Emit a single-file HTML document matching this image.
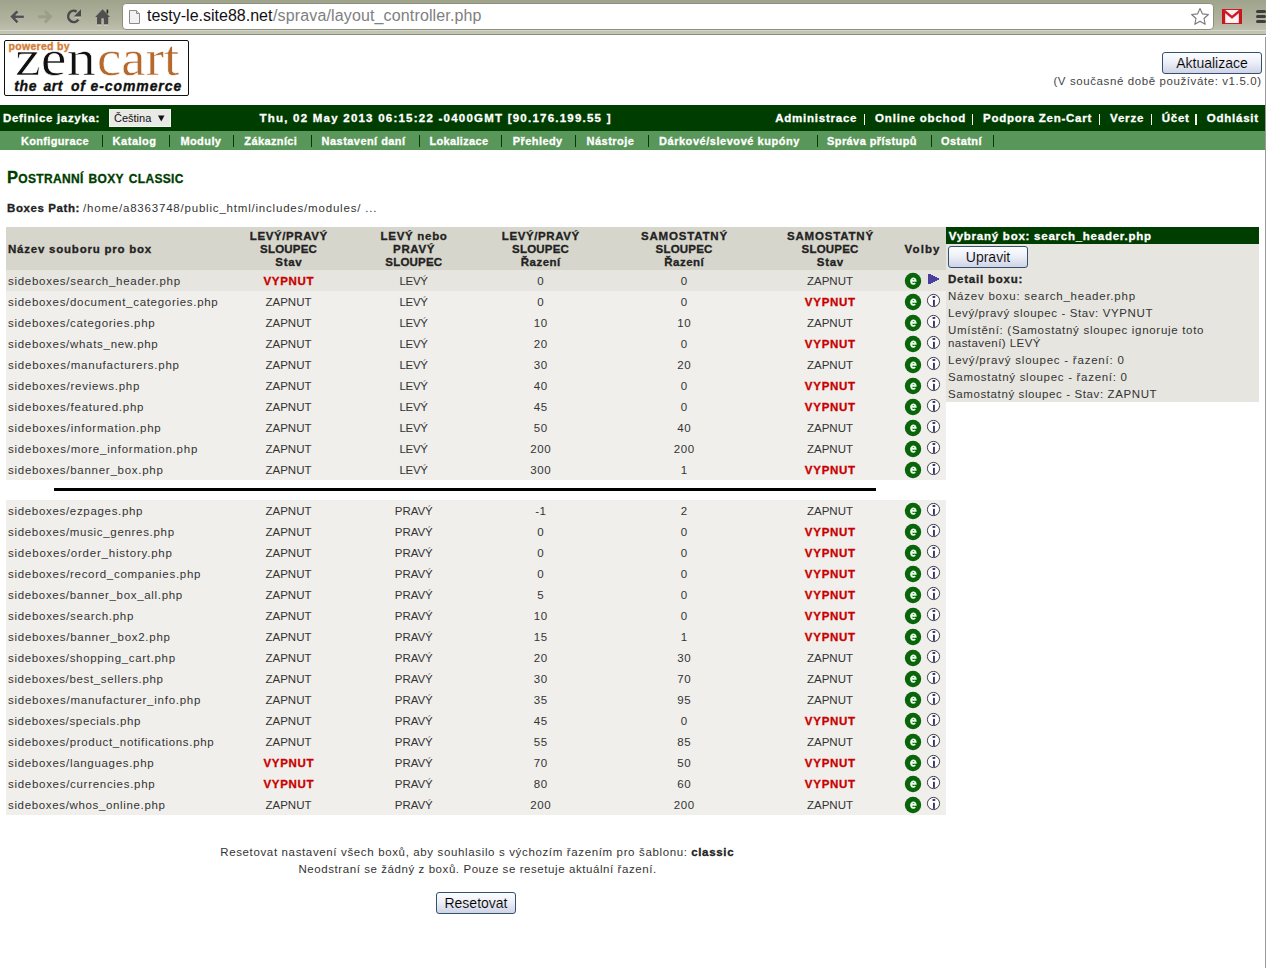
<!DOCTYPE html>
<html><head><meta charset="utf-8"><title>layout_controller</title>
<style>
html,body{margin:0;padding:0;background:#fff;width:1266px;height:968px;overflow:hidden;position:relative}
body{font-family:"Liberation Sans",sans-serif}
.t{position:absolute;white-space:pre;line-height:20px;height:20px}
.r{position:absolute}
.btn{position:absolute;box-sizing:border-box;border:1px solid #33506e;border-radius:3px;background:linear-gradient(#fdfdff 0%,#eef0f8 45%,#cfd3e6 100%);}
</style></head><body>

<div class="r" style="left:0px;top:0px;width:1266px;height:34px;background:linear-gradient(#a0a38b,#b1b39e 60%,#c4c6b6)"></div>
<div class="r" style="left:0px;top:34px;width:1266px;height:1px;background:#8a8c7c"></div>
<div class="r" style="left:0px;top:30px;width:1266px;height:1px;background:#d6d7ca"></div>
<div class="r" style="left:122px;top:3px;width:1092px;height:27px;box-sizing:border-box;border:1px solid #8d8f7e;border-radius:4px;background:#fff"></div>
<svg style="position:absolute;left:128px;top:9px" width="13" height="16" viewBox="0 0 13 16"><path d="M1.5 1.5h7l3 3v10h-10z" fill="#f2f2f2" stroke="#8a8a8a" stroke-width="1"/><path d="M8.5 1.5v3h3" fill="#ddd" stroke="#8a8a8a" stroke-width="1"/></svg>
<div class="t" style="left:147.00px;top:6px;font-size:16px;color:#111;letter-spacing:0.000px;">testy-le.site88.net</div>
<div class="t" style="left:273.00px;top:6px;font-size:16px;color:#808080;letter-spacing:0.140px;">/sprava/layout_controller.php</div>
<svg style="position:absolute;left:0;top:0" width="120" height="34" viewBox="0 0 120 34">
<g fill="#505050">
<path d="M10 16.5l6.5-6.5 2.2 2.2-3.1 3.1h8.6v3h-8.6l3.1 3.1-2.2 2.2z" stroke="#fff" stroke-opacity="0.5" stroke-width="0.6"/>
</g>
<path d="M52.5 16.5l-6.5-6.5-2.2 2.2 3.1 3.1h-8.6v3h8.6l-3.1 3.1 2.2 2.2z" fill="#9b9e8b"/>
<path d="M76.6 11.55A5.6 5.6 0 1 0 78.4 19.6" fill="none" stroke="#4a4a4a" stroke-width="2.5"/><path d="M81 9.3V16.5H73.9z" fill="#4a4a4a"/><path d="M74.5 17.2H81" stroke="#fff" stroke-opacity="0.45" stroke-width="0.8"/>
<path d="M95.2 16.9L102.6 9.3 110 16.9H108.2V24.4H103.9V19.2A1.3 1.3 0 0 0 101.3 19.2V24.4H97V16.9z" fill="#4f4f4f"/>
<rect x="106.6" y="9.6" width="1.6" height="3.8" fill="#222"/><path d="M97 25H101.3M103.9 25H108.2" stroke="#fff" stroke-opacity="0.6" stroke-width="0.9"/>
</svg>
<svg style="position:absolute;left:1190px;top:7px" width="20" height="20" viewBox="0 0 20 20"><path d="M10 1.5l2.5 5.4 5.9.6-4.4 4 1.2 5.8L10 14.3l-5.2 3 1.2-5.8-4.4-4 5.9-.6z" fill="#fff" stroke="#777" stroke-width="1.1" stroke-linejoin="round"/></svg>
<svg style="position:absolute;left:1222px;top:8.5px" width="20" height="15" viewBox="0 0 20 15"><rect x="0.5" y="0.5" width="19" height="14" fill="#fdf2f5" stroke="#d21a22" stroke-width="1"/><rect x="0" y="0" width="3.2" height="15" fill="#c8161e"/><rect x="16.8" y="0" width="3.2" height="15" fill="#c8161e"/><path d="M1.5 1.2L10 8.2 18.5 1.2" fill="none" stroke="#d21a22" stroke-width="2.4"/></svg>
<div class="r" style="left:1256px;top:10px;width:10px;height:3px;background:#3e3e3e;border-radius:1.5px"></div>
<div class="r" style="left:1256px;top:15px;width:10px;height:3px;background:#3e3e3e;border-radius:1.5px"></div>
<div class="r" style="left:1256px;top:20px;width:10px;height:3px;background:#3e3e3e;border-radius:1.5px"></div>
<div class="r" style="left:1265px;top:37px;width:1px;height:931px;background:#9a9a9a"></div>
<div class="r" style="left:4px;top:40px;width:185px;height:56px;box-sizing:border-box;border:1.5px solid #111;border-radius:2px;background:#fff"></div>
<div class="t" style="left:8.5px;top:36px;font-size:10.5px;font-weight:bold;color:#d27e38;letter-spacing:0.3px;-webkit-text-stroke:0.35px #d27e38">powered by</div>
<div style="position:absolute;left:15px;top:28px;font-family:'Liberation Serif',serif;font-size:50px;line-height:60px;color:#111;-webkit-text-stroke:0.7px #fff;white-space:pre;transform:scaleX(1.164);transform-origin:0 0">zen</div>
<div style="position:absolute;left:97.3px;top:28px;font-family:'Liberation Serif',serif;font-size:50px;line-height:60px;color:#b5692c;-webkit-text-stroke:0.5px #fff;white-space:pre;transform:scaleX(1.097);transform-origin:0 0">cart</div>
<div class="t" style="left:14.3px;top:76px;font-size:14px;font-weight:bold;font-style:italic;color:#111;-webkit-text-stroke:0.35px #111;letter-spacing:0.6px">the</div>
<div class="t" style="left:43.4px;top:76px;font-size:14px;font-weight:bold;font-style:italic;color:#111;-webkit-text-stroke:0.35px #111;letter-spacing:0.6px">art</div>
<div class="t" style="left:71px;top:76px;font-size:14px;font-weight:bold;font-style:italic;color:#111;-webkit-text-stroke:0.35px #111;letter-spacing:0.6px">of</div>
<div class="t" style="left:90.6px;top:76px;font-size:14px;font-weight:bold;font-style:italic;color:#111;-webkit-text-stroke:0.35px #111;letter-spacing:0.9px">e-commerce</div>
<div class="btn" style="left:1162px;top:52px;width:100px;height:22px"></div>
<div class="t" style="left:812.00px;top:53px;width:800px;text-align:center;font-size:14px;color:#000;letter-spacing:0.000px;-webkit-text-stroke:0.12px #eceef6;">Aktualizace</div>
<div class="t" style="left:461.60px;top:71px;width:800px;text-align:right;font-size:11.5px;color:#444;letter-spacing:0.596px;">(V současné době používáte: v1.5.0)</div>
<div class="r" style="left:0px;top:105px;width:1265px;height:26px;background:#003d00"></div>
<div class="r" style="left:0px;top:131px;width:1265px;height:19px;background:#599659"></div>
<div class="t" style="left:3.00px;top:108px;font-size:11.5px;font-weight:bold;-webkit-text-stroke:0.3px #fff;color:#fff;letter-spacing:0.673px;">Definice jazyka:</div>
<div class="r" style="left:109px;top:109px;width:62px;height:18px;box-sizing:border-box;border:1px solid #f4f4f0;background:#e9e9e6"></div>
<div class="t" style="left:114.00px;top:108px;font-size:11px;color:#111;letter-spacing:0.000px;">Čeština</div>
<svg style="position:absolute;left:158px;top:114.5px" width="8" height="8" viewBox="0 0 8 8"><path d="M0 0.5h6.5l-3.25 6z" fill="#111"/></svg>
<div class="t" style="left:259.50px;top:108px;font-size:11.5px;font-weight:bold;-webkit-text-stroke:0.3px #fff;color:#fff;letter-spacing:1.228px;">Thu, 02 May 2013 06:15:22 -0400GMT [90.176.199.55 ]</div>
<div class="t" style="left:775.20px;top:108px;font-size:11.5px;font-weight:bold;-webkit-text-stroke:0.3px #fff;color:#fff;letter-spacing:0.764px;">Administrace</div>
<div class="r" style="left:863.5px;top:114px;width:1.6px;height:10.5px;background:#f8f8ea"></div>
<div class="t" style="left:875.10px;top:108px;font-size:11.5px;font-weight:bold;-webkit-text-stroke:0.3px #fff;color:#fff;letter-spacing:0.808px;">Online obchod</div>
<div class="r" style="left:971.5px;top:114px;width:1.6px;height:10.5px;background:#f8f8ea"></div>
<div class="t" style="left:983.00px;top:108px;font-size:11.5px;font-weight:bold;-webkit-text-stroke:0.3px #fff;color:#fff;letter-spacing:0.742px;">Podpora Zen-Cart</div>
<div class="r" style="left:1098.5px;top:114px;width:1.6px;height:10.5px;background:#f8f8ea"></div>
<div class="t" style="left:1110.10px;top:108px;font-size:11.5px;font-weight:bold;-webkit-text-stroke:0.3px #fff;color:#fff;letter-spacing:0.794px;">Verze</div>
<div class="r" style="left:1150.5px;top:114px;width:1.6px;height:10.5px;background:#f8f8ea"></div>
<div class="t" style="left:1161.70px;top:108px;font-size:11.5px;font-weight:bold;-webkit-text-stroke:0.3px #fff;color:#fff;letter-spacing:0.770px;">Účet</div>
<div class="r" style="left:1195.0px;top:114px;width:1.6px;height:10.5px;background:#f8f8ea"></div>
<div class="t" style="left:1206.80px;top:108px;font-size:11.5px;font-weight:bold;-webkit-text-stroke:0.3px #fff;color:#fff;letter-spacing:0.752px;">Odhlásit</div>
<div class="t" style="left:20.90px;top:131px;font-size:11px;font-weight:bold;-webkit-text-stroke:0.3px #fff;color:#fff;letter-spacing:0.347px;">Konfigurace</div>
<div class="t" style="left:112.60px;top:131px;font-size:11px;font-weight:bold;-webkit-text-stroke:0.3px #fff;color:#fff;letter-spacing:0.522px;">Katalog</div>
<div class="t" style="left:180.40px;top:131px;font-size:11px;font-weight:bold;-webkit-text-stroke:0.3px #fff;color:#fff;letter-spacing:0.417px;">Moduly</div>
<div class="t" style="left:244.30px;top:131px;font-size:11px;font-weight:bold;-webkit-text-stroke:0.3px #fff;color:#fff;letter-spacing:0.382px;">Zákazníci</div>
<div class="t" style="left:321.60px;top:131px;font-size:11px;font-weight:bold;-webkit-text-stroke:0.3px #fff;color:#fff;letter-spacing:0.451px;">Nastavení daní</div>
<div class="t" style="left:429.40px;top:131px;font-size:11px;font-weight:bold;-webkit-text-stroke:0.3px #fff;color:#fff;letter-spacing:0.331px;">Lokalizace</div>
<div class="t" style="left:512.70px;top:131px;font-size:11px;font-weight:bold;-webkit-text-stroke:0.3px #fff;color:#fff;letter-spacing:0.438px;">Přehledy</div>
<div class="t" style="left:586.50px;top:131px;font-size:11px;font-weight:bold;-webkit-text-stroke:0.3px #fff;color:#fff;letter-spacing:0.496px;">Nástroje</div>
<div class="t" style="left:659.00px;top:131px;font-size:11px;font-weight:bold;-webkit-text-stroke:0.3px #fff;color:#fff;letter-spacing:0.541px;">Dárkové/slevové kupóny</div>
<div class="t" style="left:827.00px;top:131px;font-size:11px;font-weight:bold;-webkit-text-stroke:0.3px #fff;color:#fff;letter-spacing:0.415px;">Správa přístupů</div>
<div class="t" style="left:941.00px;top:131px;font-size:11px;font-weight:bold;-webkit-text-stroke:0.3px #fff;color:#fff;letter-spacing:0.442px;">Ostatní</div>
<div class="r" style="left:102px;top:135px;width:1px;height:12px;background:#003d00"></div>
<div class="r" style="left:169px;top:135px;width:1px;height:12px;background:#003d00"></div>
<div class="r" style="left:233px;top:135px;width:1px;height:12px;background:#003d00"></div>
<div class="r" style="left:311px;top:135px;width:1px;height:12px;background:#003d00"></div>
<div class="r" style="left:419px;top:135px;width:1px;height:12px;background:#003d00"></div>
<div class="r" style="left:501px;top:135px;width:1px;height:12px;background:#003d00"></div>
<div class="r" style="left:575px;top:135px;width:1px;height:12px;background:#003d00"></div>
<div class="r" style="left:648px;top:135px;width:1px;height:12px;background:#003d00"></div>
<div class="r" style="left:817px;top:135px;width:1px;height:12px;background:#003d00"></div>
<div class="r" style="left:931px;top:135px;width:1px;height:12px;background:#003d00"></div>
<div class="r" style="left:993px;top:135px;width:1px;height:12px;background:#003d00"></div>
<div class="t" style="left:7.00px;top:167px;font-size:16.5px;font-weight:bold;-webkit-text-stroke:0.3px #003d00;color:#003d00;letter-spacing:0.330px;font-variant:small-caps;">Postranní boxy classic</div>
<div class="t" style="left:7.00px;top:198px;font-size:11.5px;font-weight:bold;-webkit-text-stroke:0.3px #222;color:#222;letter-spacing:0.595px;">Boxes Path:</div>
<div class="t" style="left:83.00px;top:198px;font-size:11.5px;color:#333;letter-spacing:0.801px;">/home/a8363748/public_html/includes/modules/ ...</div>
<div class="r" style="left:6px;top:227px;width:940px;height:43px;background:#d7d6cc"></div>
<div class="t" style="left:8.00px;top:239px;font-size:11.5px;font-weight:bold;-webkit-text-stroke:0.3px #222;color:#222;letter-spacing:0.772px;">Název souboru pro box</div>
<div class="t" style="left:-111.20px;top:226px;width:800px;text-align:center;font-size:11.5px;font-weight:bold;-webkit-text-stroke:0.3px #222;color:#222;letter-spacing:0.598px;">LEVÝ/PRAVÝ</div>
<div class="t" style="left:-111.40px;top:239px;width:800px;text-align:center;font-size:11.5px;font-weight:bold;-webkit-text-stroke:0.3px #222;color:#222;letter-spacing:0.199px;">SLOUPEC</div>
<div class="t" style="left:-111.16px;top:252px;width:800px;text-align:center;font-size:11.5px;font-weight:bold;-webkit-text-stroke:0.3px #222;color:#222;letter-spacing:0.680px;">Stav</div>
<div class="t" style="left:14.10px;top:226px;width:800px;text-align:center;font-size:11.5px;font-weight:bold;-webkit-text-stroke:0.3px #222;color:#222;letter-spacing:0.698px;">LEVÝ nebo</div>
<div class="t" style="left:14.07px;top:239px;width:800px;text-align:center;font-size:11.5px;font-weight:bold;-webkit-text-stroke:0.3px #222;color:#222;letter-spacing:0.644px;">PRAVÝ</div>
<div class="t" style="left:13.85px;top:252px;width:800px;text-align:center;font-size:11.5px;font-weight:bold;-webkit-text-stroke:0.3px #222;color:#222;letter-spacing:0.199px;">SLOUPEC</div>
<div class="t" style="left:140.80px;top:226px;width:800px;text-align:center;font-size:11.5px;font-weight:bold;-webkit-text-stroke:0.3px #222;color:#222;letter-spacing:0.598px;">LEVÝ/PRAVÝ</div>
<div class="t" style="left:140.60px;top:239px;width:800px;text-align:center;font-size:11.5px;font-weight:bold;-webkit-text-stroke:0.3px #222;color:#222;letter-spacing:0.199px;">SLOUPEC</div>
<div class="t" style="left:140.74px;top:252px;width:800px;text-align:center;font-size:11.5px;font-weight:bold;-webkit-text-stroke:0.3px #222;color:#222;letter-spacing:0.490px;">Řazení</div>
<div class="t" style="left:284.41px;top:226px;width:800px;text-align:center;font-size:11.5px;font-weight:bold;-webkit-text-stroke:0.3px #222;color:#222;letter-spacing:0.819px;">SAMOSTATNÝ</div>
<div class="t" style="left:284.10px;top:239px;width:800px;text-align:center;font-size:11.5px;font-weight:bold;-webkit-text-stroke:0.3px #222;color:#222;letter-spacing:0.199px;">SLOUPEC</div>
<div class="t" style="left:284.24px;top:252px;width:800px;text-align:center;font-size:11.5px;font-weight:bold;-webkit-text-stroke:0.3px #222;color:#222;letter-spacing:0.490px;">Řazení</div>
<div class="t" style="left:430.41px;top:226px;width:800px;text-align:center;font-size:11.5px;font-weight:bold;-webkit-text-stroke:0.3px #222;color:#222;letter-spacing:0.819px;">SAMOSTATNÝ</div>
<div class="t" style="left:430.10px;top:239px;width:800px;text-align:center;font-size:11.5px;font-weight:bold;-webkit-text-stroke:0.3px #222;color:#222;letter-spacing:0.199px;">SLOUPEC</div>
<div class="t" style="left:430.34px;top:252px;width:800px;text-align:center;font-size:11.5px;font-weight:bold;-webkit-text-stroke:0.3px #222;color:#222;letter-spacing:0.680px;">Stav</div>
<div class="t" style="left:904.60px;top:239px;font-size:11.5px;font-weight:bold;-webkit-text-stroke:0.3px #222;color:#222;letter-spacing:1.109px;">Volby</div>
<div class="r" style="left:6px;top:270px;width:940px;height:21px;background:#e6e5e0"></div>
<div class="t" style="left:8.00px;top:271px;font-size:11.5px;color:#333;letter-spacing:0.718px;">sideboxes/search_header.php</div>
<div class="t" style="left:-111.14px;top:271px;width:800px;text-align:center;font-size:11.5px;font-weight:bold;-webkit-text-stroke:0.3px #c80000;color:#c80000;letter-spacing:0.721px;">VYPNUT</div>
<div class="t" style="left:13.57px;top:271px;width:800px;text-align:center;font-size:11.5px;color:#333;letter-spacing:-0.352px;">LEVÝ</div>
<div class="t" style="left:140.80px;top:271px;width:800px;text-align:center;font-size:11.5px;color:#333;letter-spacing:0.609px;">0</div>
<div class="t" style="left:284.30px;top:271px;width:800px;text-align:center;font-size:11.5px;color:#333;letter-spacing:0.609px;">0</div>
<div class="t" style="left:430.00px;top:271px;width:800px;text-align:center;font-size:11.5px;color:#333;letter-spacing:-0.005px;">ZAPNUT</div>
<svg style="position:absolute;left:905px;top:272.5px;overflow:visible" width="16" height="16" viewBox="0 0 16 16"><circle cx="8" cy="8" r="8.2" fill="#0a640a"/><path d="M6.1 7.9H10.65A2.3 2.75 0 1 0 10.1 9.95" fill="none" stroke="#eaffea" stroke-width="1.9"/></svg>
<svg style="position:absolute;left:928px;top:274px" width="12" height="11" viewBox="0 0 12 11"><path d="M0 0H3V1H5V2H7V3H9V4H11V6H9V7H7V8H5V9H3V10H0z" fill="#4a3f9c"/></svg>
<div class="r" style="left:6px;top:291px;width:940px;height:21px;background:#f0efeb"></div>
<div class="t" style="left:8.00px;top:292px;font-size:11.5px;color:#333;letter-spacing:0.700px;">sideboxes/document_categories.php</div>
<div class="t" style="left:-111.50px;top:292px;width:800px;text-align:center;font-size:11.5px;color:#333;letter-spacing:-0.005px;">ZAPNUT</div>
<div class="t" style="left:13.57px;top:292px;width:800px;text-align:center;font-size:11.5px;color:#333;letter-spacing:-0.352px;">LEVÝ</div>
<div class="t" style="left:140.80px;top:292px;width:800px;text-align:center;font-size:11.5px;color:#333;letter-spacing:0.609px;">0</div>
<div class="t" style="left:284.30px;top:292px;width:800px;text-align:center;font-size:11.5px;color:#333;letter-spacing:0.609px;">0</div>
<div class="t" style="left:430.36px;top:292px;width:800px;text-align:center;font-size:11.5px;font-weight:bold;-webkit-text-stroke:0.3px #c80000;color:#c80000;letter-spacing:0.721px;">VYPNUT</div>
<svg style="position:absolute;left:905px;top:293.5px;overflow:visible" width="16" height="16" viewBox="0 0 16 16"><circle cx="8" cy="8" r="8.2" fill="#0a640a"/><path d="M6.1 7.9H10.65A2.3 2.75 0 1 0 10.1 9.95" fill="none" stroke="#eaffea" stroke-width="1.9"/></svg>
<svg style="position:absolute;left:926px;top:293px" width="15" height="15" viewBox="0 0 15 15"><circle cx="7.5" cy="7.5" r="6.1" fill="#fff" stroke="#3a3a4e" stroke-width="1.0"/><ellipse cx="7.9" cy="4.1" rx="1.6" ry="1.0" fill="#2a2a5e"/><rect x="7.05" y="6.8" width="1.8" height="6.1" fill="#2e2e60"/></svg>
<div class="r" style="left:6px;top:312px;width:940px;height:21px;background:#f0efeb"></div>
<div class="t" style="left:8.00px;top:313px;font-size:11.5px;color:#333;letter-spacing:0.707px;">sideboxes/categories.php</div>
<div class="t" style="left:-111.50px;top:313px;width:800px;text-align:center;font-size:11.5px;color:#333;letter-spacing:-0.005px;">ZAPNUT</div>
<div class="t" style="left:13.57px;top:313px;width:800px;text-align:center;font-size:11.5px;color:#333;letter-spacing:-0.352px;">LEVÝ</div>
<div class="t" style="left:140.80px;top:313px;width:800px;text-align:center;font-size:11.5px;color:#333;letter-spacing:0.609px;">10</div>
<div class="t" style="left:284.30px;top:313px;width:800px;text-align:center;font-size:11.5px;color:#333;letter-spacing:0.609px;">10</div>
<div class="t" style="left:430.00px;top:313px;width:800px;text-align:center;font-size:11.5px;color:#333;letter-spacing:-0.005px;">ZAPNUT</div>
<svg style="position:absolute;left:905px;top:314.5px;overflow:visible" width="16" height="16" viewBox="0 0 16 16"><circle cx="8" cy="8" r="8.2" fill="#0a640a"/><path d="M6.1 7.9H10.65A2.3 2.75 0 1 0 10.1 9.95" fill="none" stroke="#eaffea" stroke-width="1.9"/></svg>
<svg style="position:absolute;left:926px;top:314px" width="15" height="15" viewBox="0 0 15 15"><circle cx="7.5" cy="7.5" r="6.1" fill="#fff" stroke="#3a3a4e" stroke-width="1.0"/><ellipse cx="7.9" cy="4.1" rx="1.6" ry="1.0" fill="#2a2a5e"/><rect x="7.05" y="6.8" width="1.8" height="6.1" fill="#2e2e60"/></svg>
<div class="r" style="left:6px;top:333px;width:940px;height:21px;background:#f0efeb"></div>
<div class="t" style="left:8.00px;top:334px;font-size:11.5px;color:#333;letter-spacing:0.703px;">sideboxes/whats_new.php</div>
<div class="t" style="left:-111.50px;top:334px;width:800px;text-align:center;font-size:11.5px;color:#333;letter-spacing:-0.005px;">ZAPNUT</div>
<div class="t" style="left:13.57px;top:334px;width:800px;text-align:center;font-size:11.5px;color:#333;letter-spacing:-0.352px;">LEVÝ</div>
<div class="t" style="left:140.80px;top:334px;width:800px;text-align:center;font-size:11.5px;color:#333;letter-spacing:0.609px;">20</div>
<div class="t" style="left:284.30px;top:334px;width:800px;text-align:center;font-size:11.5px;color:#333;letter-spacing:0.609px;">0</div>
<div class="t" style="left:430.36px;top:334px;width:800px;text-align:center;font-size:11.5px;font-weight:bold;-webkit-text-stroke:0.3px #c80000;color:#c80000;letter-spacing:0.721px;">VYPNUT</div>
<svg style="position:absolute;left:905px;top:335.5px;overflow:visible" width="16" height="16" viewBox="0 0 16 16"><circle cx="8" cy="8" r="8.2" fill="#0a640a"/><path d="M6.1 7.9H10.65A2.3 2.75 0 1 0 10.1 9.95" fill="none" stroke="#eaffea" stroke-width="1.9"/></svg>
<svg style="position:absolute;left:926px;top:335px" width="15" height="15" viewBox="0 0 15 15"><circle cx="7.5" cy="7.5" r="6.1" fill="#fff" stroke="#3a3a4e" stroke-width="1.0"/><ellipse cx="7.9" cy="4.1" rx="1.6" ry="1.0" fill="#2a2a5e"/><rect x="7.05" y="6.8" width="1.8" height="6.1" fill="#2e2e60"/></svg>
<div class="r" style="left:6px;top:354px;width:940px;height:21px;background:#f0efeb"></div>
<div class="t" style="left:8.00px;top:355px;font-size:11.5px;color:#333;letter-spacing:0.775px;">sideboxes/manufacturers.php</div>
<div class="t" style="left:-111.50px;top:355px;width:800px;text-align:center;font-size:11.5px;color:#333;letter-spacing:-0.005px;">ZAPNUT</div>
<div class="t" style="left:13.57px;top:355px;width:800px;text-align:center;font-size:11.5px;color:#333;letter-spacing:-0.352px;">LEVÝ</div>
<div class="t" style="left:140.80px;top:355px;width:800px;text-align:center;font-size:11.5px;color:#333;letter-spacing:0.609px;">30</div>
<div class="t" style="left:284.30px;top:355px;width:800px;text-align:center;font-size:11.5px;color:#333;letter-spacing:0.609px;">20</div>
<div class="t" style="left:430.00px;top:355px;width:800px;text-align:center;font-size:11.5px;color:#333;letter-spacing:-0.005px;">ZAPNUT</div>
<svg style="position:absolute;left:905px;top:356.5px;overflow:visible" width="16" height="16" viewBox="0 0 16 16"><circle cx="8" cy="8" r="8.2" fill="#0a640a"/><path d="M6.1 7.9H10.65A2.3 2.75 0 1 0 10.1 9.95" fill="none" stroke="#eaffea" stroke-width="1.9"/></svg>
<svg style="position:absolute;left:926px;top:356px" width="15" height="15" viewBox="0 0 15 15"><circle cx="7.5" cy="7.5" r="6.1" fill="#fff" stroke="#3a3a4e" stroke-width="1.0"/><ellipse cx="7.9" cy="4.1" rx="1.6" ry="1.0" fill="#2a2a5e"/><rect x="7.05" y="6.8" width="1.8" height="6.1" fill="#2e2e60"/></svg>
<div class="r" style="left:6px;top:375px;width:940px;height:21px;background:#f0efeb"></div>
<div class="t" style="left:8.00px;top:376px;font-size:11.5px;color:#333;letter-spacing:0.752px;">sideboxes/reviews.php</div>
<div class="t" style="left:-111.50px;top:376px;width:800px;text-align:center;font-size:11.5px;color:#333;letter-spacing:-0.005px;">ZAPNUT</div>
<div class="t" style="left:13.57px;top:376px;width:800px;text-align:center;font-size:11.5px;color:#333;letter-spacing:-0.352px;">LEVÝ</div>
<div class="t" style="left:140.80px;top:376px;width:800px;text-align:center;font-size:11.5px;color:#333;letter-spacing:0.609px;">40</div>
<div class="t" style="left:284.30px;top:376px;width:800px;text-align:center;font-size:11.5px;color:#333;letter-spacing:0.609px;">0</div>
<div class="t" style="left:430.36px;top:376px;width:800px;text-align:center;font-size:11.5px;font-weight:bold;-webkit-text-stroke:0.3px #c80000;color:#c80000;letter-spacing:0.721px;">VYPNUT</div>
<svg style="position:absolute;left:905px;top:377.5px;overflow:visible" width="16" height="16" viewBox="0 0 16 16"><circle cx="8" cy="8" r="8.2" fill="#0a640a"/><path d="M6.1 7.9H10.65A2.3 2.75 0 1 0 10.1 9.95" fill="none" stroke="#eaffea" stroke-width="1.9"/></svg>
<svg style="position:absolute;left:926px;top:377px" width="15" height="15" viewBox="0 0 15 15"><circle cx="7.5" cy="7.5" r="6.1" fill="#fff" stroke="#3a3a4e" stroke-width="1.0"/><ellipse cx="7.9" cy="4.1" rx="1.6" ry="1.0" fill="#2a2a5e"/><rect x="7.05" y="6.8" width="1.8" height="6.1" fill="#2e2e60"/></svg>
<div class="r" style="left:6px;top:396px;width:940px;height:21px;background:#f0efeb"></div>
<div class="t" style="left:8.00px;top:397px;font-size:11.5px;color:#333;letter-spacing:0.758px;">sideboxes/featured.php</div>
<div class="t" style="left:-111.50px;top:397px;width:800px;text-align:center;font-size:11.5px;color:#333;letter-spacing:-0.005px;">ZAPNUT</div>
<div class="t" style="left:13.57px;top:397px;width:800px;text-align:center;font-size:11.5px;color:#333;letter-spacing:-0.352px;">LEVÝ</div>
<div class="t" style="left:140.80px;top:397px;width:800px;text-align:center;font-size:11.5px;color:#333;letter-spacing:0.609px;">45</div>
<div class="t" style="left:284.30px;top:397px;width:800px;text-align:center;font-size:11.5px;color:#333;letter-spacing:0.609px;">0</div>
<div class="t" style="left:430.36px;top:397px;width:800px;text-align:center;font-size:11.5px;font-weight:bold;-webkit-text-stroke:0.3px #c80000;color:#c80000;letter-spacing:0.721px;">VYPNUT</div>
<svg style="position:absolute;left:905px;top:398.5px;overflow:visible" width="16" height="16" viewBox="0 0 16 16"><circle cx="8" cy="8" r="8.2" fill="#0a640a"/><path d="M6.1 7.9H10.65A2.3 2.75 0 1 0 10.1 9.95" fill="none" stroke="#eaffea" stroke-width="1.9"/></svg>
<svg style="position:absolute;left:926px;top:398px" width="15" height="15" viewBox="0 0 15 15"><circle cx="7.5" cy="7.5" r="6.1" fill="#fff" stroke="#3a3a4e" stroke-width="1.0"/><ellipse cx="7.9" cy="4.1" rx="1.6" ry="1.0" fill="#2a2a5e"/><rect x="7.05" y="6.8" width="1.8" height="6.1" fill="#2e2e60"/></svg>
<div class="r" style="left:6px;top:417px;width:940px;height:21px;background:#f0efeb"></div>
<div class="t" style="left:8.00px;top:418px;font-size:11.5px;color:#333;letter-spacing:0.770px;">sideboxes/information.php</div>
<div class="t" style="left:-111.50px;top:418px;width:800px;text-align:center;font-size:11.5px;color:#333;letter-spacing:-0.005px;">ZAPNUT</div>
<div class="t" style="left:13.57px;top:418px;width:800px;text-align:center;font-size:11.5px;color:#333;letter-spacing:-0.352px;">LEVÝ</div>
<div class="t" style="left:140.80px;top:418px;width:800px;text-align:center;font-size:11.5px;color:#333;letter-spacing:0.609px;">50</div>
<div class="t" style="left:284.30px;top:418px;width:800px;text-align:center;font-size:11.5px;color:#333;letter-spacing:0.609px;">40</div>
<div class="t" style="left:430.00px;top:418px;width:800px;text-align:center;font-size:11.5px;color:#333;letter-spacing:-0.005px;">ZAPNUT</div>
<svg style="position:absolute;left:905px;top:419.5px;overflow:visible" width="16" height="16" viewBox="0 0 16 16"><circle cx="8" cy="8" r="8.2" fill="#0a640a"/><path d="M6.1 7.9H10.65A2.3 2.75 0 1 0 10.1 9.95" fill="none" stroke="#eaffea" stroke-width="1.9"/></svg>
<svg style="position:absolute;left:926px;top:419px" width="15" height="15" viewBox="0 0 15 15"><circle cx="7.5" cy="7.5" r="6.1" fill="#fff" stroke="#3a3a4e" stroke-width="1.0"/><ellipse cx="7.9" cy="4.1" rx="1.6" ry="1.0" fill="#2a2a5e"/><rect x="7.05" y="6.8" width="1.8" height="6.1" fill="#2e2e60"/></svg>
<div class="r" style="left:6px;top:438px;width:940px;height:21px;background:#f0efeb"></div>
<div class="t" style="left:8.00px;top:439px;font-size:11.5px;color:#333;letter-spacing:0.775px;">sideboxes/more_information.php</div>
<div class="t" style="left:-111.50px;top:439px;width:800px;text-align:center;font-size:11.5px;color:#333;letter-spacing:-0.005px;">ZAPNUT</div>
<div class="t" style="left:13.57px;top:439px;width:800px;text-align:center;font-size:11.5px;color:#333;letter-spacing:-0.352px;">LEVÝ</div>
<div class="t" style="left:140.80px;top:439px;width:800px;text-align:center;font-size:11.5px;color:#333;letter-spacing:0.609px;">200</div>
<div class="t" style="left:284.30px;top:439px;width:800px;text-align:center;font-size:11.5px;color:#333;letter-spacing:0.609px;">200</div>
<div class="t" style="left:430.00px;top:439px;width:800px;text-align:center;font-size:11.5px;color:#333;letter-spacing:-0.005px;">ZAPNUT</div>
<svg style="position:absolute;left:905px;top:440.5px;overflow:visible" width="16" height="16" viewBox="0 0 16 16"><circle cx="8" cy="8" r="8.2" fill="#0a640a"/><path d="M6.1 7.9H10.65A2.3 2.75 0 1 0 10.1 9.95" fill="none" stroke="#eaffea" stroke-width="1.9"/></svg>
<svg style="position:absolute;left:926px;top:440px" width="15" height="15" viewBox="0 0 15 15"><circle cx="7.5" cy="7.5" r="6.1" fill="#fff" stroke="#3a3a4e" stroke-width="1.0"/><ellipse cx="7.9" cy="4.1" rx="1.6" ry="1.0" fill="#2a2a5e"/><rect x="7.05" y="6.8" width="1.8" height="6.1" fill="#2e2e60"/></svg>
<div class="r" style="left:6px;top:459px;width:940px;height:21px;background:#f0efeb"></div>
<div class="t" style="left:8.00px;top:460px;font-size:11.5px;color:#333;letter-spacing:0.726px;">sideboxes/banner_box.php</div>
<div class="t" style="left:-111.50px;top:460px;width:800px;text-align:center;font-size:11.5px;color:#333;letter-spacing:-0.005px;">ZAPNUT</div>
<div class="t" style="left:13.57px;top:460px;width:800px;text-align:center;font-size:11.5px;color:#333;letter-spacing:-0.352px;">LEVÝ</div>
<div class="t" style="left:140.80px;top:460px;width:800px;text-align:center;font-size:11.5px;color:#333;letter-spacing:0.609px;">300</div>
<div class="t" style="left:284.30px;top:460px;width:800px;text-align:center;font-size:11.5px;color:#333;letter-spacing:0.609px;">1</div>
<div class="t" style="left:430.36px;top:460px;width:800px;text-align:center;font-size:11.5px;font-weight:bold;-webkit-text-stroke:0.3px #c80000;color:#c80000;letter-spacing:0.721px;">VYPNUT</div>
<svg style="position:absolute;left:905px;top:461.5px;overflow:visible" width="16" height="16" viewBox="0 0 16 16"><circle cx="8" cy="8" r="8.2" fill="#0a640a"/><path d="M6.1 7.9H10.65A2.3 2.75 0 1 0 10.1 9.95" fill="none" stroke="#eaffea" stroke-width="1.9"/></svg>
<svg style="position:absolute;left:926px;top:461px" width="15" height="15" viewBox="0 0 15 15"><circle cx="7.5" cy="7.5" r="6.1" fill="#fff" stroke="#3a3a4e" stroke-width="1.0"/><ellipse cx="7.9" cy="4.1" rx="1.6" ry="1.0" fill="#2a2a5e"/><rect x="7.05" y="6.8" width="1.8" height="6.1" fill="#2e2e60"/></svg>
<div class="r" style="left:54px;top:488px;width:822px;height:3px;background:#000"></div>
<div class="r" style="left:6px;top:500px;width:940px;height:21px;background:#f0efeb"></div>
<div class="t" style="left:8.00px;top:501px;font-size:11.5px;color:#333;letter-spacing:0.684px;">sideboxes/ezpages.php</div>
<div class="t" style="left:-111.50px;top:501px;width:800px;text-align:center;font-size:11.5px;color:#333;letter-spacing:-0.005px;">ZAPNUT</div>
<div class="t" style="left:13.74px;top:501px;width:800px;text-align:center;font-size:11.5px;color:#333;letter-spacing:-0.028px;">PRAVÝ</div>
<div class="t" style="left:140.70px;top:501px;width:800px;text-align:center;font-size:11.5px;color:#333;letter-spacing:0.391px;">-1</div>
<div class="t" style="left:284.30px;top:501px;width:800px;text-align:center;font-size:11.5px;color:#333;letter-spacing:0.609px;">2</div>
<div class="t" style="left:430.00px;top:501px;width:800px;text-align:center;font-size:11.5px;color:#333;letter-spacing:-0.005px;">ZAPNUT</div>
<svg style="position:absolute;left:905px;top:502.5px;overflow:visible" width="16" height="16" viewBox="0 0 16 16"><circle cx="8" cy="8" r="8.2" fill="#0a640a"/><path d="M6.1 7.9H10.65A2.3 2.75 0 1 0 10.1 9.95" fill="none" stroke="#eaffea" stroke-width="1.9"/></svg>
<svg style="position:absolute;left:926px;top:502px" width="15" height="15" viewBox="0 0 15 15"><circle cx="7.5" cy="7.5" r="6.1" fill="#fff" stroke="#3a3a4e" stroke-width="1.0"/><ellipse cx="7.9" cy="4.1" rx="1.6" ry="1.0" fill="#2a2a5e"/><rect x="7.05" y="6.8" width="1.8" height="6.1" fill="#2e2e60"/></svg>
<div class="r" style="left:6px;top:521px;width:940px;height:21px;background:#f0efeb"></div>
<div class="t" style="left:8.00px;top:522px;font-size:11.5px;color:#333;letter-spacing:0.683px;">sideboxes/music_genres.php</div>
<div class="t" style="left:-111.50px;top:522px;width:800px;text-align:center;font-size:11.5px;color:#333;letter-spacing:-0.005px;">ZAPNUT</div>
<div class="t" style="left:13.74px;top:522px;width:800px;text-align:center;font-size:11.5px;color:#333;letter-spacing:-0.028px;">PRAVÝ</div>
<div class="t" style="left:140.80px;top:522px;width:800px;text-align:center;font-size:11.5px;color:#333;letter-spacing:0.609px;">0</div>
<div class="t" style="left:284.30px;top:522px;width:800px;text-align:center;font-size:11.5px;color:#333;letter-spacing:0.609px;">0</div>
<div class="t" style="left:430.36px;top:522px;width:800px;text-align:center;font-size:11.5px;font-weight:bold;-webkit-text-stroke:0.3px #c80000;color:#c80000;letter-spacing:0.721px;">VYPNUT</div>
<svg style="position:absolute;left:905px;top:523.5px;overflow:visible" width="16" height="16" viewBox="0 0 16 16"><circle cx="8" cy="8" r="8.2" fill="#0a640a"/><path d="M6.1 7.9H10.65A2.3 2.75 0 1 0 10.1 9.95" fill="none" stroke="#eaffea" stroke-width="1.9"/></svg>
<svg style="position:absolute;left:926px;top:523px" width="15" height="15" viewBox="0 0 15 15"><circle cx="7.5" cy="7.5" r="6.1" fill="#fff" stroke="#3a3a4e" stroke-width="1.0"/><ellipse cx="7.9" cy="4.1" rx="1.6" ry="1.0" fill="#2a2a5e"/><rect x="7.05" y="6.8" width="1.8" height="6.1" fill="#2e2e60"/></svg>
<div class="r" style="left:6px;top:542px;width:940px;height:21px;background:#f0efeb"></div>
<div class="t" style="left:8.00px;top:543px;font-size:11.5px;color:#333;letter-spacing:0.780px;">sideboxes/order_history.php</div>
<div class="t" style="left:-111.50px;top:543px;width:800px;text-align:center;font-size:11.5px;color:#333;letter-spacing:-0.005px;">ZAPNUT</div>
<div class="t" style="left:13.74px;top:543px;width:800px;text-align:center;font-size:11.5px;color:#333;letter-spacing:-0.028px;">PRAVÝ</div>
<div class="t" style="left:140.80px;top:543px;width:800px;text-align:center;font-size:11.5px;color:#333;letter-spacing:0.609px;">0</div>
<div class="t" style="left:284.30px;top:543px;width:800px;text-align:center;font-size:11.5px;color:#333;letter-spacing:0.609px;">0</div>
<div class="t" style="left:430.36px;top:543px;width:800px;text-align:center;font-size:11.5px;font-weight:bold;-webkit-text-stroke:0.3px #c80000;color:#c80000;letter-spacing:0.721px;">VYPNUT</div>
<svg style="position:absolute;left:905px;top:544.5px;overflow:visible" width="16" height="16" viewBox="0 0 16 16"><circle cx="8" cy="8" r="8.2" fill="#0a640a"/><path d="M6.1 7.9H10.65A2.3 2.75 0 1 0 10.1 9.95" fill="none" stroke="#eaffea" stroke-width="1.9"/></svg>
<svg style="position:absolute;left:926px;top:544px" width="15" height="15" viewBox="0 0 15 15"><circle cx="7.5" cy="7.5" r="6.1" fill="#fff" stroke="#3a3a4e" stroke-width="1.0"/><ellipse cx="7.9" cy="4.1" rx="1.6" ry="1.0" fill="#2a2a5e"/><rect x="7.05" y="6.8" width="1.8" height="6.1" fill="#2e2e60"/></svg>
<div class="r" style="left:6px;top:563px;width:940px;height:21px;background:#f0efeb"></div>
<div class="t" style="left:8.00px;top:564px;font-size:11.5px;color:#333;letter-spacing:0.705px;">sideboxes/record_companies.php</div>
<div class="t" style="left:-111.50px;top:564px;width:800px;text-align:center;font-size:11.5px;color:#333;letter-spacing:-0.005px;">ZAPNUT</div>
<div class="t" style="left:13.74px;top:564px;width:800px;text-align:center;font-size:11.5px;color:#333;letter-spacing:-0.028px;">PRAVÝ</div>
<div class="t" style="left:140.80px;top:564px;width:800px;text-align:center;font-size:11.5px;color:#333;letter-spacing:0.609px;">0</div>
<div class="t" style="left:284.30px;top:564px;width:800px;text-align:center;font-size:11.5px;color:#333;letter-spacing:0.609px;">0</div>
<div class="t" style="left:430.36px;top:564px;width:800px;text-align:center;font-size:11.5px;font-weight:bold;-webkit-text-stroke:0.3px #c80000;color:#c80000;letter-spacing:0.721px;">VYPNUT</div>
<svg style="position:absolute;left:905px;top:565.5px;overflow:visible" width="16" height="16" viewBox="0 0 16 16"><circle cx="8" cy="8" r="8.2" fill="#0a640a"/><path d="M6.1 7.9H10.65A2.3 2.75 0 1 0 10.1 9.95" fill="none" stroke="#eaffea" stroke-width="1.9"/></svg>
<svg style="position:absolute;left:926px;top:565px" width="15" height="15" viewBox="0 0 15 15"><circle cx="7.5" cy="7.5" r="6.1" fill="#fff" stroke="#3a3a4e" stroke-width="1.0"/><ellipse cx="7.9" cy="4.1" rx="1.6" ry="1.0" fill="#2a2a5e"/><rect x="7.05" y="6.8" width="1.8" height="6.1" fill="#2e2e60"/></svg>
<div class="r" style="left:6px;top:584px;width:940px;height:21px;background:#f0efeb"></div>
<div class="t" style="left:8.00px;top:585px;font-size:11.5px;color:#333;letter-spacing:0.673px;">sideboxes/banner_box_all.php</div>
<div class="t" style="left:-111.50px;top:585px;width:800px;text-align:center;font-size:11.5px;color:#333;letter-spacing:-0.005px;">ZAPNUT</div>
<div class="t" style="left:13.74px;top:585px;width:800px;text-align:center;font-size:11.5px;color:#333;letter-spacing:-0.028px;">PRAVÝ</div>
<div class="t" style="left:140.80px;top:585px;width:800px;text-align:center;font-size:11.5px;color:#333;letter-spacing:0.609px;">5</div>
<div class="t" style="left:284.30px;top:585px;width:800px;text-align:center;font-size:11.5px;color:#333;letter-spacing:0.609px;">0</div>
<div class="t" style="left:430.36px;top:585px;width:800px;text-align:center;font-size:11.5px;font-weight:bold;-webkit-text-stroke:0.3px #c80000;color:#c80000;letter-spacing:0.721px;">VYPNUT</div>
<svg style="position:absolute;left:905px;top:586.5px;overflow:visible" width="16" height="16" viewBox="0 0 16 16"><circle cx="8" cy="8" r="8.2" fill="#0a640a"/><path d="M6.1 7.9H10.65A2.3 2.75 0 1 0 10.1 9.95" fill="none" stroke="#eaffea" stroke-width="1.9"/></svg>
<svg style="position:absolute;left:926px;top:586px" width="15" height="15" viewBox="0 0 15 15"><circle cx="7.5" cy="7.5" r="6.1" fill="#fff" stroke="#3a3a4e" stroke-width="1.0"/><ellipse cx="7.9" cy="4.1" rx="1.6" ry="1.0" fill="#2a2a5e"/><rect x="7.05" y="6.8" width="1.8" height="6.1" fill="#2e2e60"/></svg>
<div class="r" style="left:6px;top:605px;width:940px;height:21px;background:#f0efeb"></div>
<div class="t" style="left:8.00px;top:606px;font-size:11.5px;color:#333;letter-spacing:0.709px;">sideboxes/search.php</div>
<div class="t" style="left:-111.50px;top:606px;width:800px;text-align:center;font-size:11.5px;color:#333;letter-spacing:-0.005px;">ZAPNUT</div>
<div class="t" style="left:13.74px;top:606px;width:800px;text-align:center;font-size:11.5px;color:#333;letter-spacing:-0.028px;">PRAVÝ</div>
<div class="t" style="left:140.80px;top:606px;width:800px;text-align:center;font-size:11.5px;color:#333;letter-spacing:0.609px;">10</div>
<div class="t" style="left:284.30px;top:606px;width:800px;text-align:center;font-size:11.5px;color:#333;letter-spacing:0.609px;">0</div>
<div class="t" style="left:430.36px;top:606px;width:800px;text-align:center;font-size:11.5px;font-weight:bold;-webkit-text-stroke:0.3px #c80000;color:#c80000;letter-spacing:0.721px;">VYPNUT</div>
<svg style="position:absolute;left:905px;top:607.5px;overflow:visible" width="16" height="16" viewBox="0 0 16 16"><circle cx="8" cy="8" r="8.2" fill="#0a640a"/><path d="M6.1 7.9H10.65A2.3 2.75 0 1 0 10.1 9.95" fill="none" stroke="#eaffea" stroke-width="1.9"/></svg>
<svg style="position:absolute;left:926px;top:607px" width="15" height="15" viewBox="0 0 15 15"><circle cx="7.5" cy="7.5" r="6.1" fill="#fff" stroke="#3a3a4e" stroke-width="1.0"/><ellipse cx="7.9" cy="4.1" rx="1.6" ry="1.0" fill="#2a2a5e"/><rect x="7.05" y="6.8" width="1.8" height="6.1" fill="#2e2e60"/></svg>
<div class="r" style="left:6px;top:626px;width:940px;height:21px;background:#f0efeb"></div>
<div class="t" style="left:8.00px;top:627px;font-size:11.5px;color:#333;letter-spacing:0.726px;">sideboxes/banner_box2.php</div>
<div class="t" style="left:-111.50px;top:627px;width:800px;text-align:center;font-size:11.5px;color:#333;letter-spacing:-0.005px;">ZAPNUT</div>
<div class="t" style="left:13.74px;top:627px;width:800px;text-align:center;font-size:11.5px;color:#333;letter-spacing:-0.028px;">PRAVÝ</div>
<div class="t" style="left:140.80px;top:627px;width:800px;text-align:center;font-size:11.5px;color:#333;letter-spacing:0.609px;">15</div>
<div class="t" style="left:284.30px;top:627px;width:800px;text-align:center;font-size:11.5px;color:#333;letter-spacing:0.609px;">1</div>
<div class="t" style="left:430.36px;top:627px;width:800px;text-align:center;font-size:11.5px;font-weight:bold;-webkit-text-stroke:0.3px #c80000;color:#c80000;letter-spacing:0.721px;">VYPNUT</div>
<svg style="position:absolute;left:905px;top:628.5px;overflow:visible" width="16" height="16" viewBox="0 0 16 16"><circle cx="8" cy="8" r="8.2" fill="#0a640a"/><path d="M6.1 7.9H10.65A2.3 2.75 0 1 0 10.1 9.95" fill="none" stroke="#eaffea" stroke-width="1.9"/></svg>
<svg style="position:absolute;left:926px;top:628px" width="15" height="15" viewBox="0 0 15 15"><circle cx="7.5" cy="7.5" r="6.1" fill="#fff" stroke="#3a3a4e" stroke-width="1.0"/><ellipse cx="7.9" cy="4.1" rx="1.6" ry="1.0" fill="#2a2a5e"/><rect x="7.05" y="6.8" width="1.8" height="6.1" fill="#2e2e60"/></svg>
<div class="r" style="left:6px;top:647px;width:940px;height:21px;background:#f0efeb"></div>
<div class="t" style="left:8.00px;top:648px;font-size:11.5px;color:#333;letter-spacing:0.671px;">sideboxes/shopping_cart.php</div>
<div class="t" style="left:-111.50px;top:648px;width:800px;text-align:center;font-size:11.5px;color:#333;letter-spacing:-0.005px;">ZAPNUT</div>
<div class="t" style="left:13.74px;top:648px;width:800px;text-align:center;font-size:11.5px;color:#333;letter-spacing:-0.028px;">PRAVÝ</div>
<div class="t" style="left:140.80px;top:648px;width:800px;text-align:center;font-size:11.5px;color:#333;letter-spacing:0.609px;">20</div>
<div class="t" style="left:284.30px;top:648px;width:800px;text-align:center;font-size:11.5px;color:#333;letter-spacing:0.609px;">30</div>
<div class="t" style="left:430.00px;top:648px;width:800px;text-align:center;font-size:11.5px;color:#333;letter-spacing:-0.005px;">ZAPNUT</div>
<svg style="position:absolute;left:905px;top:649.5px;overflow:visible" width="16" height="16" viewBox="0 0 16 16"><circle cx="8" cy="8" r="8.2" fill="#0a640a"/><path d="M6.1 7.9H10.65A2.3 2.75 0 1 0 10.1 9.95" fill="none" stroke="#eaffea" stroke-width="1.9"/></svg>
<svg style="position:absolute;left:926px;top:649px" width="15" height="15" viewBox="0 0 15 15"><circle cx="7.5" cy="7.5" r="6.1" fill="#fff" stroke="#3a3a4e" stroke-width="1.0"/><ellipse cx="7.9" cy="4.1" rx="1.6" ry="1.0" fill="#2a2a5e"/><rect x="7.05" y="6.8" width="1.8" height="6.1" fill="#2e2e60"/></svg>
<div class="r" style="left:6px;top:668px;width:940px;height:21px;background:#f0efeb"></div>
<div class="t" style="left:8.00px;top:669px;font-size:11.5px;color:#333;letter-spacing:0.646px;">sideboxes/best_sellers.php</div>
<div class="t" style="left:-111.50px;top:669px;width:800px;text-align:center;font-size:11.5px;color:#333;letter-spacing:-0.005px;">ZAPNUT</div>
<div class="t" style="left:13.74px;top:669px;width:800px;text-align:center;font-size:11.5px;color:#333;letter-spacing:-0.028px;">PRAVÝ</div>
<div class="t" style="left:140.80px;top:669px;width:800px;text-align:center;font-size:11.5px;color:#333;letter-spacing:0.609px;">30</div>
<div class="t" style="left:284.30px;top:669px;width:800px;text-align:center;font-size:11.5px;color:#333;letter-spacing:0.609px;">70</div>
<div class="t" style="left:430.00px;top:669px;width:800px;text-align:center;font-size:11.5px;color:#333;letter-spacing:-0.005px;">ZAPNUT</div>
<svg style="position:absolute;left:905px;top:670.5px;overflow:visible" width="16" height="16" viewBox="0 0 16 16"><circle cx="8" cy="8" r="8.2" fill="#0a640a"/><path d="M6.1 7.9H10.65A2.3 2.75 0 1 0 10.1 9.95" fill="none" stroke="#eaffea" stroke-width="1.9"/></svg>
<svg style="position:absolute;left:926px;top:670px" width="15" height="15" viewBox="0 0 15 15"><circle cx="7.5" cy="7.5" r="6.1" fill="#fff" stroke="#3a3a4e" stroke-width="1.0"/><ellipse cx="7.9" cy="4.1" rx="1.6" ry="1.0" fill="#2a2a5e"/><rect x="7.05" y="6.8" width="1.8" height="6.1" fill="#2e2e60"/></svg>
<div class="r" style="left:6px;top:689px;width:940px;height:21px;background:#f0efeb"></div>
<div class="t" style="left:8.00px;top:690px;font-size:11.5px;color:#333;letter-spacing:0.745px;">sideboxes/manufacturer_info.php</div>
<div class="t" style="left:-111.50px;top:690px;width:800px;text-align:center;font-size:11.5px;color:#333;letter-spacing:-0.005px;">ZAPNUT</div>
<div class="t" style="left:13.74px;top:690px;width:800px;text-align:center;font-size:11.5px;color:#333;letter-spacing:-0.028px;">PRAVÝ</div>
<div class="t" style="left:140.80px;top:690px;width:800px;text-align:center;font-size:11.5px;color:#333;letter-spacing:0.609px;">35</div>
<div class="t" style="left:284.30px;top:690px;width:800px;text-align:center;font-size:11.5px;color:#333;letter-spacing:0.609px;">95</div>
<div class="t" style="left:430.00px;top:690px;width:800px;text-align:center;font-size:11.5px;color:#333;letter-spacing:-0.005px;">ZAPNUT</div>
<svg style="position:absolute;left:905px;top:691.5px;overflow:visible" width="16" height="16" viewBox="0 0 16 16"><circle cx="8" cy="8" r="8.2" fill="#0a640a"/><path d="M6.1 7.9H10.65A2.3 2.75 0 1 0 10.1 9.95" fill="none" stroke="#eaffea" stroke-width="1.9"/></svg>
<svg style="position:absolute;left:926px;top:691px" width="15" height="15" viewBox="0 0 15 15"><circle cx="7.5" cy="7.5" r="6.1" fill="#fff" stroke="#3a3a4e" stroke-width="1.0"/><ellipse cx="7.9" cy="4.1" rx="1.6" ry="1.0" fill="#2a2a5e"/><rect x="7.05" y="6.8" width="1.8" height="6.1" fill="#2e2e60"/></svg>
<div class="r" style="left:6px;top:710px;width:940px;height:21px;background:#f0efeb"></div>
<div class="t" style="left:8.00px;top:711px;font-size:11.5px;color:#333;letter-spacing:0.647px;">sideboxes/specials.php</div>
<div class="t" style="left:-111.50px;top:711px;width:800px;text-align:center;font-size:11.5px;color:#333;letter-spacing:-0.005px;">ZAPNUT</div>
<div class="t" style="left:13.74px;top:711px;width:800px;text-align:center;font-size:11.5px;color:#333;letter-spacing:-0.028px;">PRAVÝ</div>
<div class="t" style="left:140.80px;top:711px;width:800px;text-align:center;font-size:11.5px;color:#333;letter-spacing:0.609px;">45</div>
<div class="t" style="left:284.30px;top:711px;width:800px;text-align:center;font-size:11.5px;color:#333;letter-spacing:0.609px;">0</div>
<div class="t" style="left:430.36px;top:711px;width:800px;text-align:center;font-size:11.5px;font-weight:bold;-webkit-text-stroke:0.3px #c80000;color:#c80000;letter-spacing:0.721px;">VYPNUT</div>
<svg style="position:absolute;left:905px;top:712.5px;overflow:visible" width="16" height="16" viewBox="0 0 16 16"><circle cx="8" cy="8" r="8.2" fill="#0a640a"/><path d="M6.1 7.9H10.65A2.3 2.75 0 1 0 10.1 9.95" fill="none" stroke="#eaffea" stroke-width="1.9"/></svg>
<svg style="position:absolute;left:926px;top:712px" width="15" height="15" viewBox="0 0 15 15"><circle cx="7.5" cy="7.5" r="6.1" fill="#fff" stroke="#3a3a4e" stroke-width="1.0"/><ellipse cx="7.9" cy="4.1" rx="1.6" ry="1.0" fill="#2a2a5e"/><rect x="7.05" y="6.8" width="1.8" height="6.1" fill="#2e2e60"/></svg>
<div class="r" style="left:6px;top:731px;width:940px;height:21px;background:#f0efeb"></div>
<div class="t" style="left:8.00px;top:732px;font-size:11.5px;color:#333;letter-spacing:0.672px;">sideboxes/product_notifications.php</div>
<div class="t" style="left:-111.50px;top:732px;width:800px;text-align:center;font-size:11.5px;color:#333;letter-spacing:-0.005px;">ZAPNUT</div>
<div class="t" style="left:13.74px;top:732px;width:800px;text-align:center;font-size:11.5px;color:#333;letter-spacing:-0.028px;">PRAVÝ</div>
<div class="t" style="left:140.80px;top:732px;width:800px;text-align:center;font-size:11.5px;color:#333;letter-spacing:0.609px;">55</div>
<div class="t" style="left:284.30px;top:732px;width:800px;text-align:center;font-size:11.5px;color:#333;letter-spacing:0.609px;">85</div>
<div class="t" style="left:430.00px;top:732px;width:800px;text-align:center;font-size:11.5px;color:#333;letter-spacing:-0.005px;">ZAPNUT</div>
<svg style="position:absolute;left:905px;top:733.5px;overflow:visible" width="16" height="16" viewBox="0 0 16 16"><circle cx="8" cy="8" r="8.2" fill="#0a640a"/><path d="M6.1 7.9H10.65A2.3 2.75 0 1 0 10.1 9.95" fill="none" stroke="#eaffea" stroke-width="1.9"/></svg>
<svg style="position:absolute;left:926px;top:733px" width="15" height="15" viewBox="0 0 15 15"><circle cx="7.5" cy="7.5" r="6.1" fill="#fff" stroke="#3a3a4e" stroke-width="1.0"/><ellipse cx="7.9" cy="4.1" rx="1.6" ry="1.0" fill="#2a2a5e"/><rect x="7.05" y="6.8" width="1.8" height="6.1" fill="#2e2e60"/></svg>
<div class="r" style="left:6px;top:752px;width:940px;height:21px;background:#f0efeb"></div>
<div class="t" style="left:8.00px;top:753px;font-size:11.5px;color:#333;letter-spacing:0.693px;">sideboxes/languages.php</div>
<div class="t" style="left:-111.14px;top:753px;width:800px;text-align:center;font-size:11.5px;font-weight:bold;-webkit-text-stroke:0.3px #c80000;color:#c80000;letter-spacing:0.721px;">VYPNUT</div>
<div class="t" style="left:13.74px;top:753px;width:800px;text-align:center;font-size:11.5px;color:#333;letter-spacing:-0.028px;">PRAVÝ</div>
<div class="t" style="left:140.80px;top:753px;width:800px;text-align:center;font-size:11.5px;color:#333;letter-spacing:0.609px;">70</div>
<div class="t" style="left:284.30px;top:753px;width:800px;text-align:center;font-size:11.5px;color:#333;letter-spacing:0.609px;">50</div>
<div class="t" style="left:430.36px;top:753px;width:800px;text-align:center;font-size:11.5px;font-weight:bold;-webkit-text-stroke:0.3px #c80000;color:#c80000;letter-spacing:0.721px;">VYPNUT</div>
<svg style="position:absolute;left:905px;top:754.5px;overflow:visible" width="16" height="16" viewBox="0 0 16 16"><circle cx="8" cy="8" r="8.2" fill="#0a640a"/><path d="M6.1 7.9H10.65A2.3 2.75 0 1 0 10.1 9.95" fill="none" stroke="#eaffea" stroke-width="1.9"/></svg>
<svg style="position:absolute;left:926px;top:754px" width="15" height="15" viewBox="0 0 15 15"><circle cx="7.5" cy="7.5" r="6.1" fill="#fff" stroke="#3a3a4e" stroke-width="1.0"/><ellipse cx="7.9" cy="4.1" rx="1.6" ry="1.0" fill="#2a2a5e"/><rect x="7.05" y="6.8" width="1.8" height="6.1" fill="#2e2e60"/></svg>
<div class="r" style="left:6px;top:773px;width:940px;height:21px;background:#f0efeb"></div>
<div class="t" style="left:8.00px;top:774px;font-size:11.5px;color:#333;letter-spacing:0.707px;">sideboxes/currencies.php</div>
<div class="t" style="left:-111.14px;top:774px;width:800px;text-align:center;font-size:11.5px;font-weight:bold;-webkit-text-stroke:0.3px #c80000;color:#c80000;letter-spacing:0.721px;">VYPNUT</div>
<div class="t" style="left:13.74px;top:774px;width:800px;text-align:center;font-size:11.5px;color:#333;letter-spacing:-0.028px;">PRAVÝ</div>
<div class="t" style="left:140.80px;top:774px;width:800px;text-align:center;font-size:11.5px;color:#333;letter-spacing:0.609px;">80</div>
<div class="t" style="left:284.30px;top:774px;width:800px;text-align:center;font-size:11.5px;color:#333;letter-spacing:0.609px;">60</div>
<div class="t" style="left:430.36px;top:774px;width:800px;text-align:center;font-size:11.5px;font-weight:bold;-webkit-text-stroke:0.3px #c80000;color:#c80000;letter-spacing:0.721px;">VYPNUT</div>
<svg style="position:absolute;left:905px;top:775.5px;overflow:visible" width="16" height="16" viewBox="0 0 16 16"><circle cx="8" cy="8" r="8.2" fill="#0a640a"/><path d="M6.1 7.9H10.65A2.3 2.75 0 1 0 10.1 9.95" fill="none" stroke="#eaffea" stroke-width="1.9"/></svg>
<svg style="position:absolute;left:926px;top:775px" width="15" height="15" viewBox="0 0 15 15"><circle cx="7.5" cy="7.5" r="6.1" fill="#fff" stroke="#3a3a4e" stroke-width="1.0"/><ellipse cx="7.9" cy="4.1" rx="1.6" ry="1.0" fill="#2a2a5e"/><rect x="7.05" y="6.8" width="1.8" height="6.1" fill="#2e2e60"/></svg>
<div class="r" style="left:6px;top:794px;width:940px;height:21px;background:#f0efeb"></div>
<div class="t" style="left:8.00px;top:795px;font-size:11.5px;color:#333;letter-spacing:0.650px;">sideboxes/whos_online.php</div>
<div class="t" style="left:-111.50px;top:795px;width:800px;text-align:center;font-size:11.5px;color:#333;letter-spacing:-0.005px;">ZAPNUT</div>
<div class="t" style="left:13.74px;top:795px;width:800px;text-align:center;font-size:11.5px;color:#333;letter-spacing:-0.028px;">PRAVÝ</div>
<div class="t" style="left:140.80px;top:795px;width:800px;text-align:center;font-size:11.5px;color:#333;letter-spacing:0.609px;">200</div>
<div class="t" style="left:284.30px;top:795px;width:800px;text-align:center;font-size:11.5px;color:#333;letter-spacing:0.609px;">200</div>
<div class="t" style="left:430.00px;top:795px;width:800px;text-align:center;font-size:11.5px;color:#333;letter-spacing:-0.005px;">ZAPNUT</div>
<svg style="position:absolute;left:905px;top:796.5px;overflow:visible" width="16" height="16" viewBox="0 0 16 16"><circle cx="8" cy="8" r="8.2" fill="#0a640a"/><path d="M6.1 7.9H10.65A2.3 2.75 0 1 0 10.1 9.95" fill="none" stroke="#eaffea" stroke-width="1.9"/></svg>
<svg style="position:absolute;left:926px;top:796px" width="15" height="15" viewBox="0 0 15 15"><circle cx="7.5" cy="7.5" r="6.1" fill="#fff" stroke="#3a3a4e" stroke-width="1.0"/><ellipse cx="7.9" cy="4.1" rx="1.6" ry="1.0" fill="#2a2a5e"/><rect x="7.05" y="6.8" width="1.8" height="6.1" fill="#2e2e60"/></svg>
<div class="r" style="left:946px;top:227px;width:313px;height:17px;background:#003d00"></div>
<div class="t" style="left:948.70px;top:226px;font-size:11.5px;font-weight:bold;-webkit-text-stroke:0.3px #fff;color:#fff;letter-spacing:0.753px;">Vybraný box: search_header.php</div>
<div class="r" style="left:946px;top:244px;width:313px;height:158px;background:#e6e5df"></div>
<div class="btn" style="left:948px;top:246px;width:80px;height:22px"></div>
<div class="t" style="left:588.00px;top:247px;width:800px;text-align:center;font-size:14px;color:#000;letter-spacing:0.000px;-webkit-text-stroke:0.12px #eceef6;">Upravit</div>
<div class="t" style="left:948.00px;top:269px;font-size:11.5px;font-weight:bold;-webkit-text-stroke:0.3px #222;color:#222;letter-spacing:0.767px;">Detail boxu:</div>
<div class="t" style="left:948.00px;top:286px;font-size:11.5px;color:#333;letter-spacing:0.766px;">Název boxu: search_header.php</div>
<div class="t" style="left:948.00px;top:303px;font-size:11.5px;color:#333;letter-spacing:0.618px;">Levý/pravý sloupec - Stav: VYPNUT</div>
<div class="t" style="left:948.00px;top:320px;font-size:11.5px;color:#333;letter-spacing:0.695px;">Umístění: (Samostatný sloupec ignoruje toto</div>
<div class="t" style="left:948.00px;top:333px;font-size:11.5px;color:#333;letter-spacing:0.438px;">nastavení) LEVÝ</div>
<div class="t" style="left:948.00px;top:350px;font-size:11.5px;color:#333;letter-spacing:0.772px;">Levý/pravý sloupec - řazení: 0</div>
<div class="t" style="left:948.00px;top:367px;font-size:11.5px;color:#333;letter-spacing:0.704px;">Samostatný sloupec - řazení: 0</div>
<div class="t" style="left:948.00px;top:384px;font-size:11.5px;color:#333;letter-spacing:0.606px;">Samostatný sloupec - Stav: ZAPNUT</div>
<div class="t" style="left:220.20px;top:842px;font-size:11.5px;color:#333;letter-spacing:0.641px;">Resetovat nastavení všech boxů, aby souhlasilo s výchozím řazením pro šablonu: </div>
<div class="t" style="left:691.20px;top:842px;font-size:11.5px;font-weight:bold;-webkit-text-stroke:0.3px #222;color:#222;letter-spacing:0.667px;">classic</div>
<div class="t" style="left:77.59px;top:859px;width:800px;text-align:center;font-size:11.5px;color:#333;letter-spacing:0.571px;">Neodstraní se žádný z boxů. Pouze se resetuje aktuální řazení.</div>
<div class="btn" style="left:436px;top:892px;width:80px;height:22px"></div>
<div class="t" style="left:76.00px;top:893px;width:800px;text-align:center;font-size:14px;color:#000;letter-spacing:0.000px;-webkit-text-stroke:0.12px #eceef6;">Resetovat</div>
</body></html>
